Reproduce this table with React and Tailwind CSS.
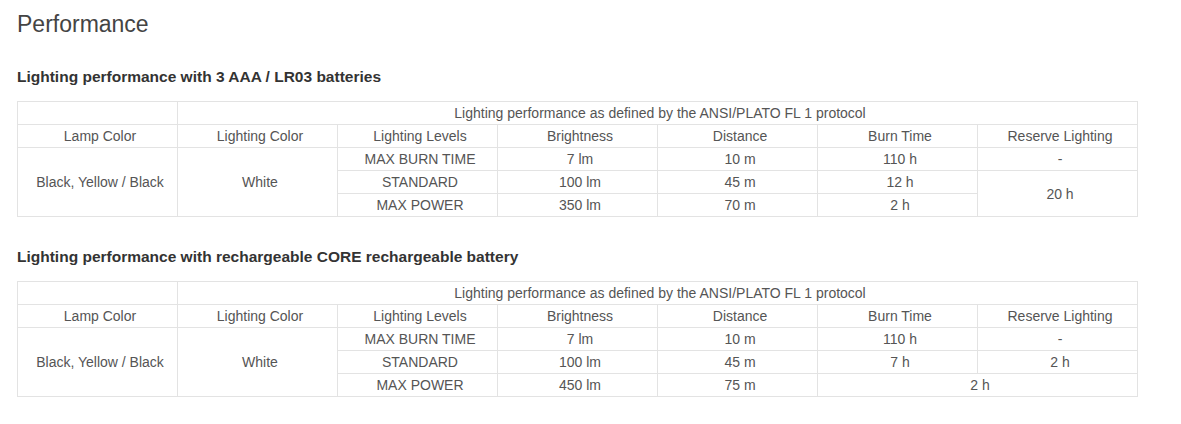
import React from 'react';

const tables = [
  {
    title: 'Lighting performance with 3 AAA / LR03 batteries',
    rows: [
      ['MAX BURN TIME', '7 lm', '10 m', '110 h', '-'],
      ['STANDARD', '100 lm', '45 m', '12 h', '20 h'],
      ['MAX POWER', '350 lm', '70 m', '2 h', null],
    ],
  },
  {
    title: 'Lighting performance with rechargeable CORE rechargeable battery',
    rows: [
      ['MAX BURN TIME', '7 lm', '10 m', '110 h', '-'],
      ['STANDARD', '100 lm', '45 m', '7 h', '2 h'],
      ['MAX POWER', '450 lm', '75 m', '2 h'],
    ],
  },
];

const cell = 'border border-[#e3e3e3] h-[23px] p-0 pl-[5px] text-center align-middle font-normal';

function PerfTable({ data, first }) {
  return (
    <div className={first ? 'mt-[29px]' : 'mt-[30px]'}>
      <h3 className="text-[15.5px] leading-[20px] text-[#333] font-bold">{data.title}</h3>
      <table className="mt-[14px] w-[1121px] table-fixed border-collapse text-[14px] leading-[16px] text-[#555]">
        <colgroup>
          {[0, 1, 2, 3, 4, 5, 6].map((i) => (
            <col key={i} className="w-[160px]" />
          ))}
        </colgroup>
        <tbody>
          <tr>
            <td className={cell}></td>
            <td className={cell} colSpan={6}>
              Lighting performance as defined by the ANSI/PLATO FL 1 protocol
            </td>
          </tr>
          <tr>
            {['Lamp Color', 'Lighting Color', 'Lighting Levels', 'Brightness', 'Distance', 'Burn Time', 'Reserve Lighting'].map((h) => (
              <td key={h} className={cell}>{h}</td>
            ))}
          </tr>
          {data.rows.map((r, i) => (
            <tr key={i}>
              {i === 0 && (
                <>
                  <td className={cell} rowSpan={3}>Black, Yellow / Black</td>
                  <td className={cell} rowSpan={3}>White</td>
                </>
              )}
              <td className={cell}>{r[0]}</td>
              <td className={cell}>{r[1]}</td>
              <td className={cell}>{r[2]}</td>
              {r.length === 4 ? (
                <td className={cell} colSpan={2}>{r[3]}</td>
              ) : (
                <>
                  <td className={cell}>{r[3]}</td>
                  {r[4] !== null && (
                    <td className={cell} rowSpan={first && i === 1 ? 2 : 1}>{r[4]}</td>
                  )}
                </>
              )}
            </tr>
          ))}
        </tbody>
      </table>
    </div>
  );
}

export default function App() {
  return (
    <div className="bg-white w-[1181px] h-[424px] px-[17px] pt-[10px] font-['Liberation_Sans',Arial,sans-serif]">
      <h2 className="text-[23px] leading-[28px] text-[#444] font-normal">Performance</h2>
      {tables.map((t, i) => (
        <PerfTable key={i} data={t} first={i === 0} />
      ))}
    </div>
  );
}
